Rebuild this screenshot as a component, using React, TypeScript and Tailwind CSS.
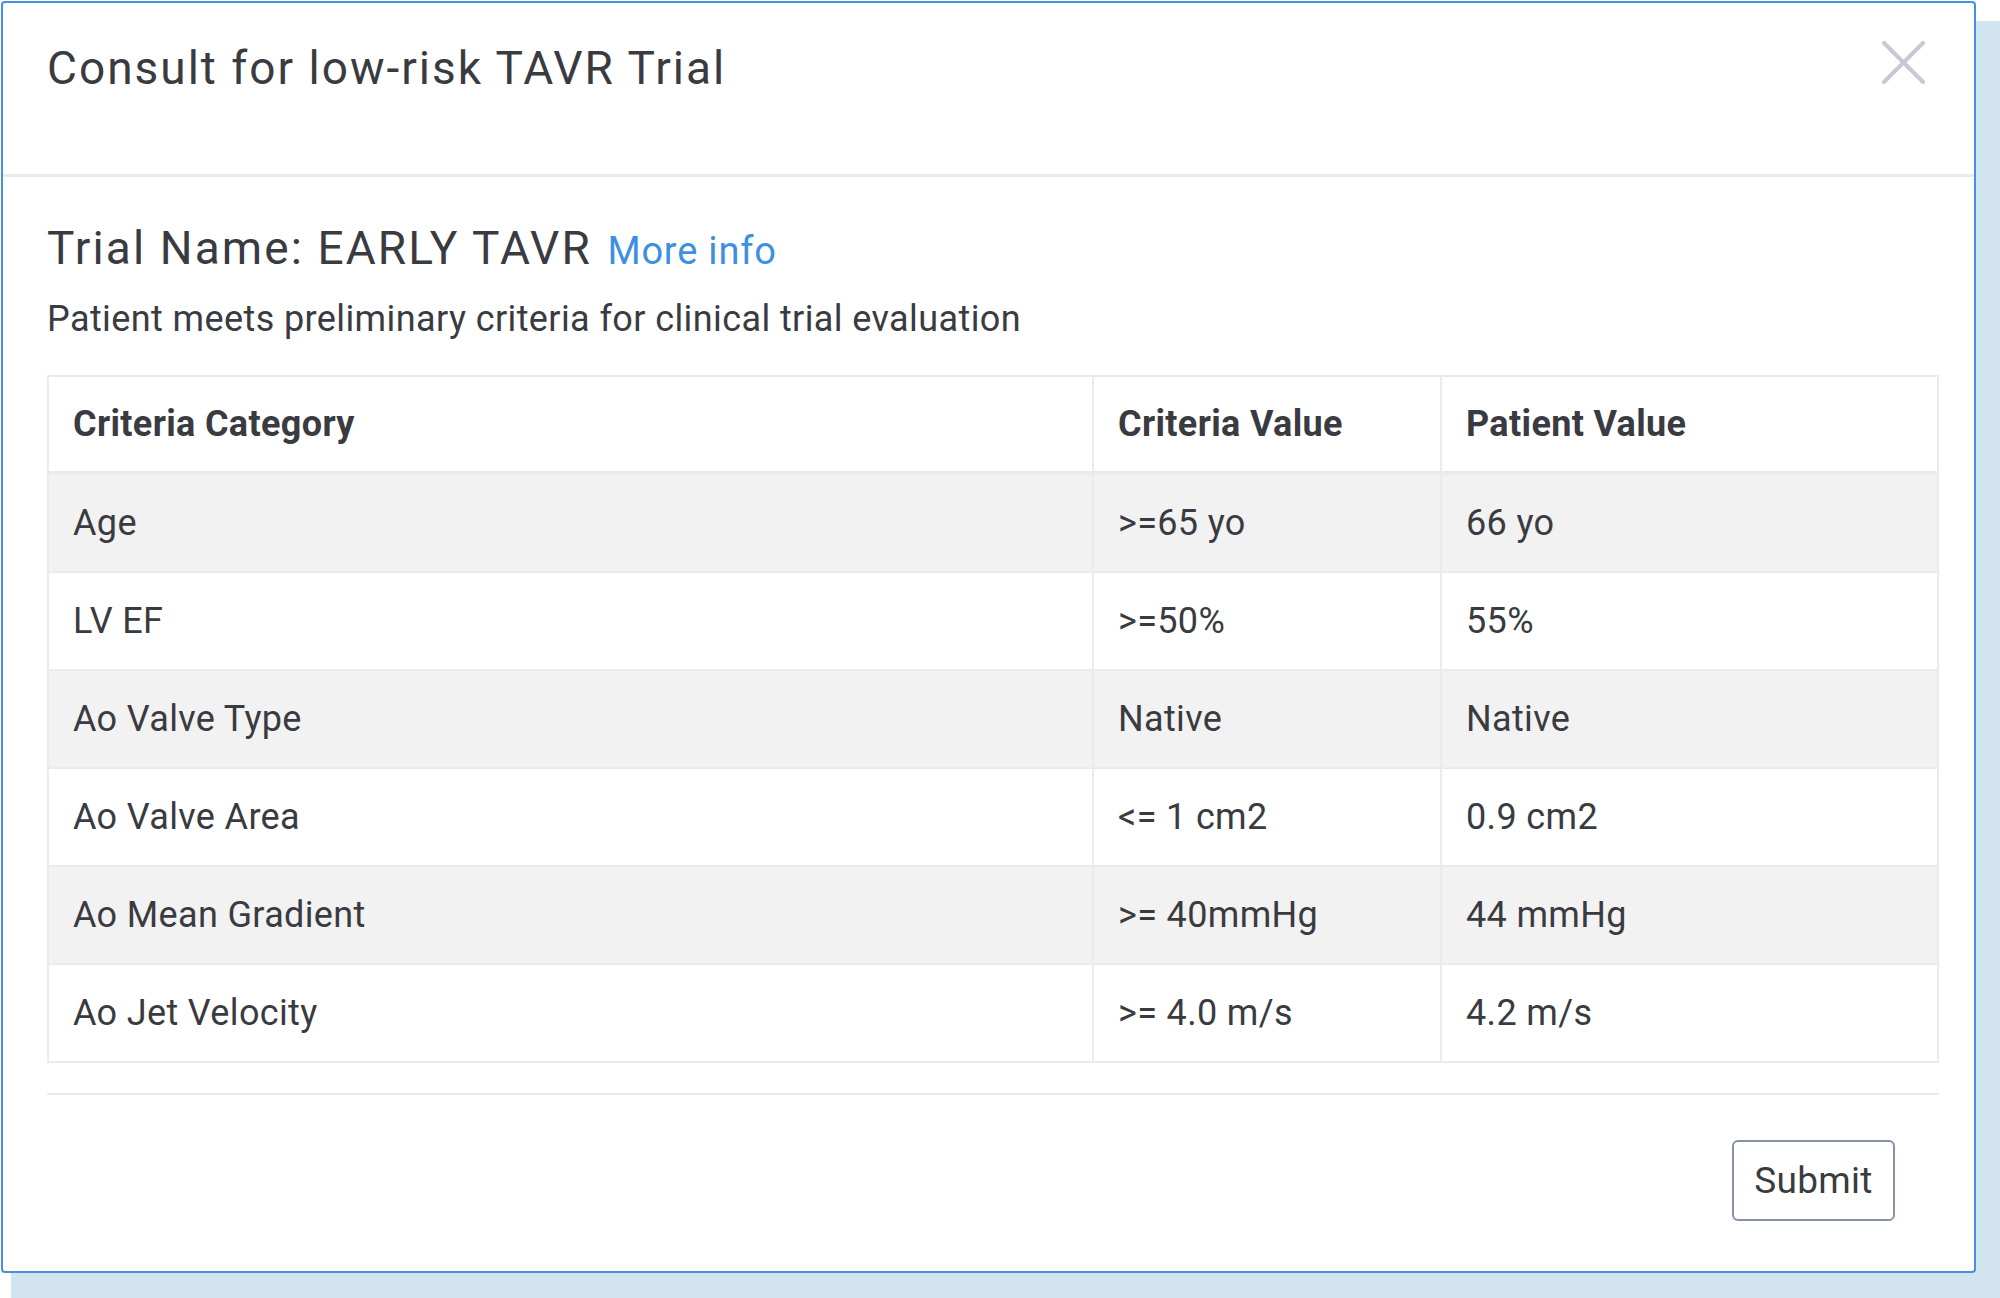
import React from "react";

interface CriteriaRow {
  category: string;
  criteria: string;
  patient: string;
}

const rows: CriteriaRow[] = [
  { category: "Age", criteria: ">=65 yo", patient: "66 yo" },
  { category: "LV EF", criteria: ">=50%", patient: "55%" },
  { category: "Ao Valve Type", criteria: "Native", patient: "Native" },
  { category: "Ao Valve Area", criteria: "<= 1 cm2", patient: "0.9 cm2" },
  { category: "Ao Mean Gradient", criteria: ">= 40mmHg", patient: "44 mmHg" },
  { category: "Ao Jet Velocity", criteria: ">= 4.0 m/s", patient: "4.2 m/s" },
];

function CloseIcon() {
  return (
    <svg width="43" height="43" viewBox="0 0 43 43" fill="none" aria-hidden="true">
      <path d="M2 2L41 41M41 2L2 41" stroke="#c6c9d4" strokeWidth="4" strokeLinecap="round" />
    </svg>
  );
}

function CriteriaTable() {
  return (
    <div className="w-[1892px] border-2 border-[#e9ecef] text-[36px] leading-[54px] tracking-[0.35px] text-[#3a3b41]">
      <div className="grid h-[98px] grid-cols-[1045px_348px_1fr] border-b-4 border-[#e9ecef] font-bold">
        <div className="flex items-center border-r-2 border-[#e9ecef] pl-[24px]">Criteria Category</div>
        <div className="flex items-center border-r-2 border-[#e9ecef] pl-[24px]">Criteria Value</div>
        <div className="flex items-center pl-[24px]">Patient Value</div>
      </div>
      {rows.map((row, index) => (
        <div
          key={row.category}
          className={`grid grid-cols-[1045px_348px_1fr] ${
            index === rows.length - 1 ? "h-[96px]" : "h-[98px] border-b-2 border-[#e9ecef]"
          } ${index % 2 === 0 ? "bg-[#f2f2f2]" : "bg-white"}`}
        >
          <div className="flex items-center border-r-2 border-[#e9ecef] pl-[24px]">{row.category}</div>
          <div className="flex items-center border-r-2 border-[#e9ecef] pl-[24px]">{row.criteria}</div>
          <div className="flex items-center pl-[24px]">{row.patient}</div>
        </div>
      ))}
    </div>
  );
}

export default function App() {
  return (
    <div className="h-[1298px] w-[2000px] overflow-hidden bg-white pl-px pt-px font-['Roboto',sans-serif]">
      <div className="flex h-[1272px] w-[1975px] flex-col rounded-[4px] border-2 border-[#4790e0] bg-white shadow-[30px_40px_0_20px_#d2e4f0]">
        <header className="flex h-[174px] items-start justify-between border-b-[3px] border-[#e9ecef] pl-[44px] pr-[49px] pt-[38px]">
          <h1 className="text-[46px] leading-[54px] tracking-[2px] text-[#3a3b41]">
            Consult for low-risk TAVR Trial
          </h1>
          <button type="button" aria-label="Close" className="block">
            <CloseIcon />
          </button>
        </header>

        <div className="flex flex-1 flex-col px-[44px] pt-[44px]">
          <h2 className="text-[46px] leading-[54px] tracking-[2.1px] text-[#3a3b41]">
            Trial Name: EARLY TAVR{" "}
            <a href="#" className="ml-[2px] text-[38px] tracking-[0.8px] text-[#3d8fe0]">
              More info
            </a>
          </h2>
          <p className="mt-[19px] text-[36px] leading-[44px] tracking-[0.4px] text-[#3a3b41]">
            Patient meets preliminary criteria for clinical trial evaluation
          </p>

          <div className="mt-[34px]">
            <CriteriaTable />
          </div>

          <div className="mt-[30px] h-[2px] w-[1892px] bg-[#e9ecef]" />

          <div className="flex w-[1892px] justify-end pr-[44px] pt-[45px]">
            <button
              type="button"
              className="h-[81px] w-[163px] rounded-[6px] border-2 border-[#8791a9] bg-white text-[37px] tracking-[0.3px] text-[#3a3b41]"
            >
              Submit
            </button>
          </div>
        </div>
      </div>
    </div>
  );
}
